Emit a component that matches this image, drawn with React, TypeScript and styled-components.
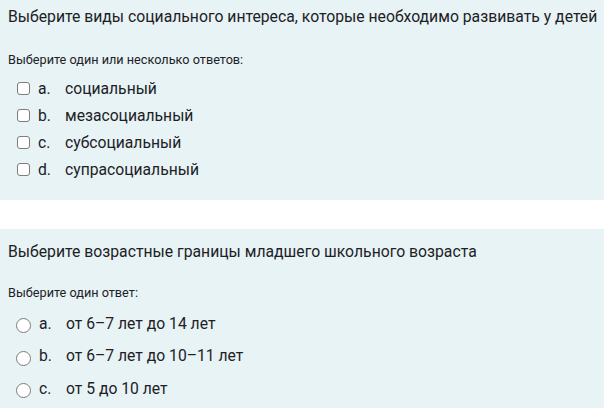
import { createGlobalStyle, styled } from "styled-components";

interface Question {
  text: string;
  prompt: string;
  multiple: boolean;
  answers: string[];
}

const questions: Question[] = [
  {
    text: "Выберите виды социального интереса, которые необходимо развивать у детей",
    prompt: "Выберите один или несколько ответов:",
    multiple: true,
    answers: ["социальный", "мезасоциальный", "субсоциальный", "супрасоциальный"],
  },
  {
    text: "Выберите возрастные границы младшего школьного возраста",
    prompt: "Выберите один ответ:",
    multiple: false,
    answers: ["от 6–7 лет до 14 лет", "от 6–7 лет до 10–11 лет", "от 5 до 10 лет"],
  },
];

const letters = ["a.", "b.", "c.", "d."];

export default function App() {
  return (
    <>
      <GlobalStyle />
      <Page>
        {questions.map((q, qi) => (
          <Formulation key={qi} $multiple={q.multiple}>
            <QText>{q.text}</QText>
            <Prompt $multiple={q.multiple}>{q.prompt}</Prompt>
            <AnswerList $multiple={q.multiple}>
              {q.answers.map((a, i) => (
                <AnswerRow key={i} $multiple={q.multiple}>
                  {q.multiple ? <CheckBox /> : <Radio />}
                  <Letter>{letters[i]}</Letter>
                  <Label>{a}</Label>
                </AnswerRow>
              ))}
            </AnswerList>
          </Formulation>
        ))}
      </Page>
    </>
  );
}

const GlobalStyle = createGlobalStyle`
  html, body {
    margin: 0;
    padding: 0;
    background: #ffffff;
  }
  body {
    font-family: Roboto, "Liberation Sans", sans-serif;
    font-weight: 400;
    color: #1d2125;
  }
`;

const Page = styled.div`
  display: flex;
  flex-direction: column;
  gap: 29px;
  width: 604px;
`;

const Formulation = styled.div<{ $multiple: boolean }>`
  box-sizing: border-box;
  background: #e7f3f5;
  padding: ${(p) => (p.$multiple ? "6px" : "12px")} 8px 0 8px;
  height: ${(p) => (p.$multiple ? "200px" : "179px")};
`;

const QText = styled.div`
  font-size: 15.75px;
  line-height: 22px;
  white-space: nowrap;
`;

const Prompt = styled.div<{ $multiple: boolean }>`
  font-size: 12.7px;
  line-height: 16px;
  margin-top: ${(p) => (p.$multiple ? "24px" : "22px")};
`;

const AnswerList = styled.div<{ $multiple: boolean }>`
  display: flex;
  flex-direction: column;
  margin-top: ${(p) => (p.$multiple ? "7px" : "6px")};
`;

const AnswerRow = styled.div<{ $multiple: boolean }>`
  display: flex;
  align-items: center;
  height: ${(p) => (p.$multiple ? "27px" : "32.5px")};
  padding-left: ${(p) => (p.$multiple ? "9px" : "8px")};
  font-size: 15.7px;
`;

const CheckBox = styled.span`
  box-sizing: border-box;
  width: 13px;
  height: 13px;
  border: 1px solid #7d7d7d;
  border-radius: 3px;
  background: #ffffff;
  flex: none;
`;

const Radio = styled.span`
  box-sizing: border-box;
  width: 15px;
  height: 15px;
  margin-top: 5px;
  border: 1px solid #7d7d7d;
  border-radius: 50%;
  background: #ffffff;
  flex: none;
`;

const Letter = styled.span`
  margin-left: 8px;
  width: 27px;
`;

const Label = styled.span``;
